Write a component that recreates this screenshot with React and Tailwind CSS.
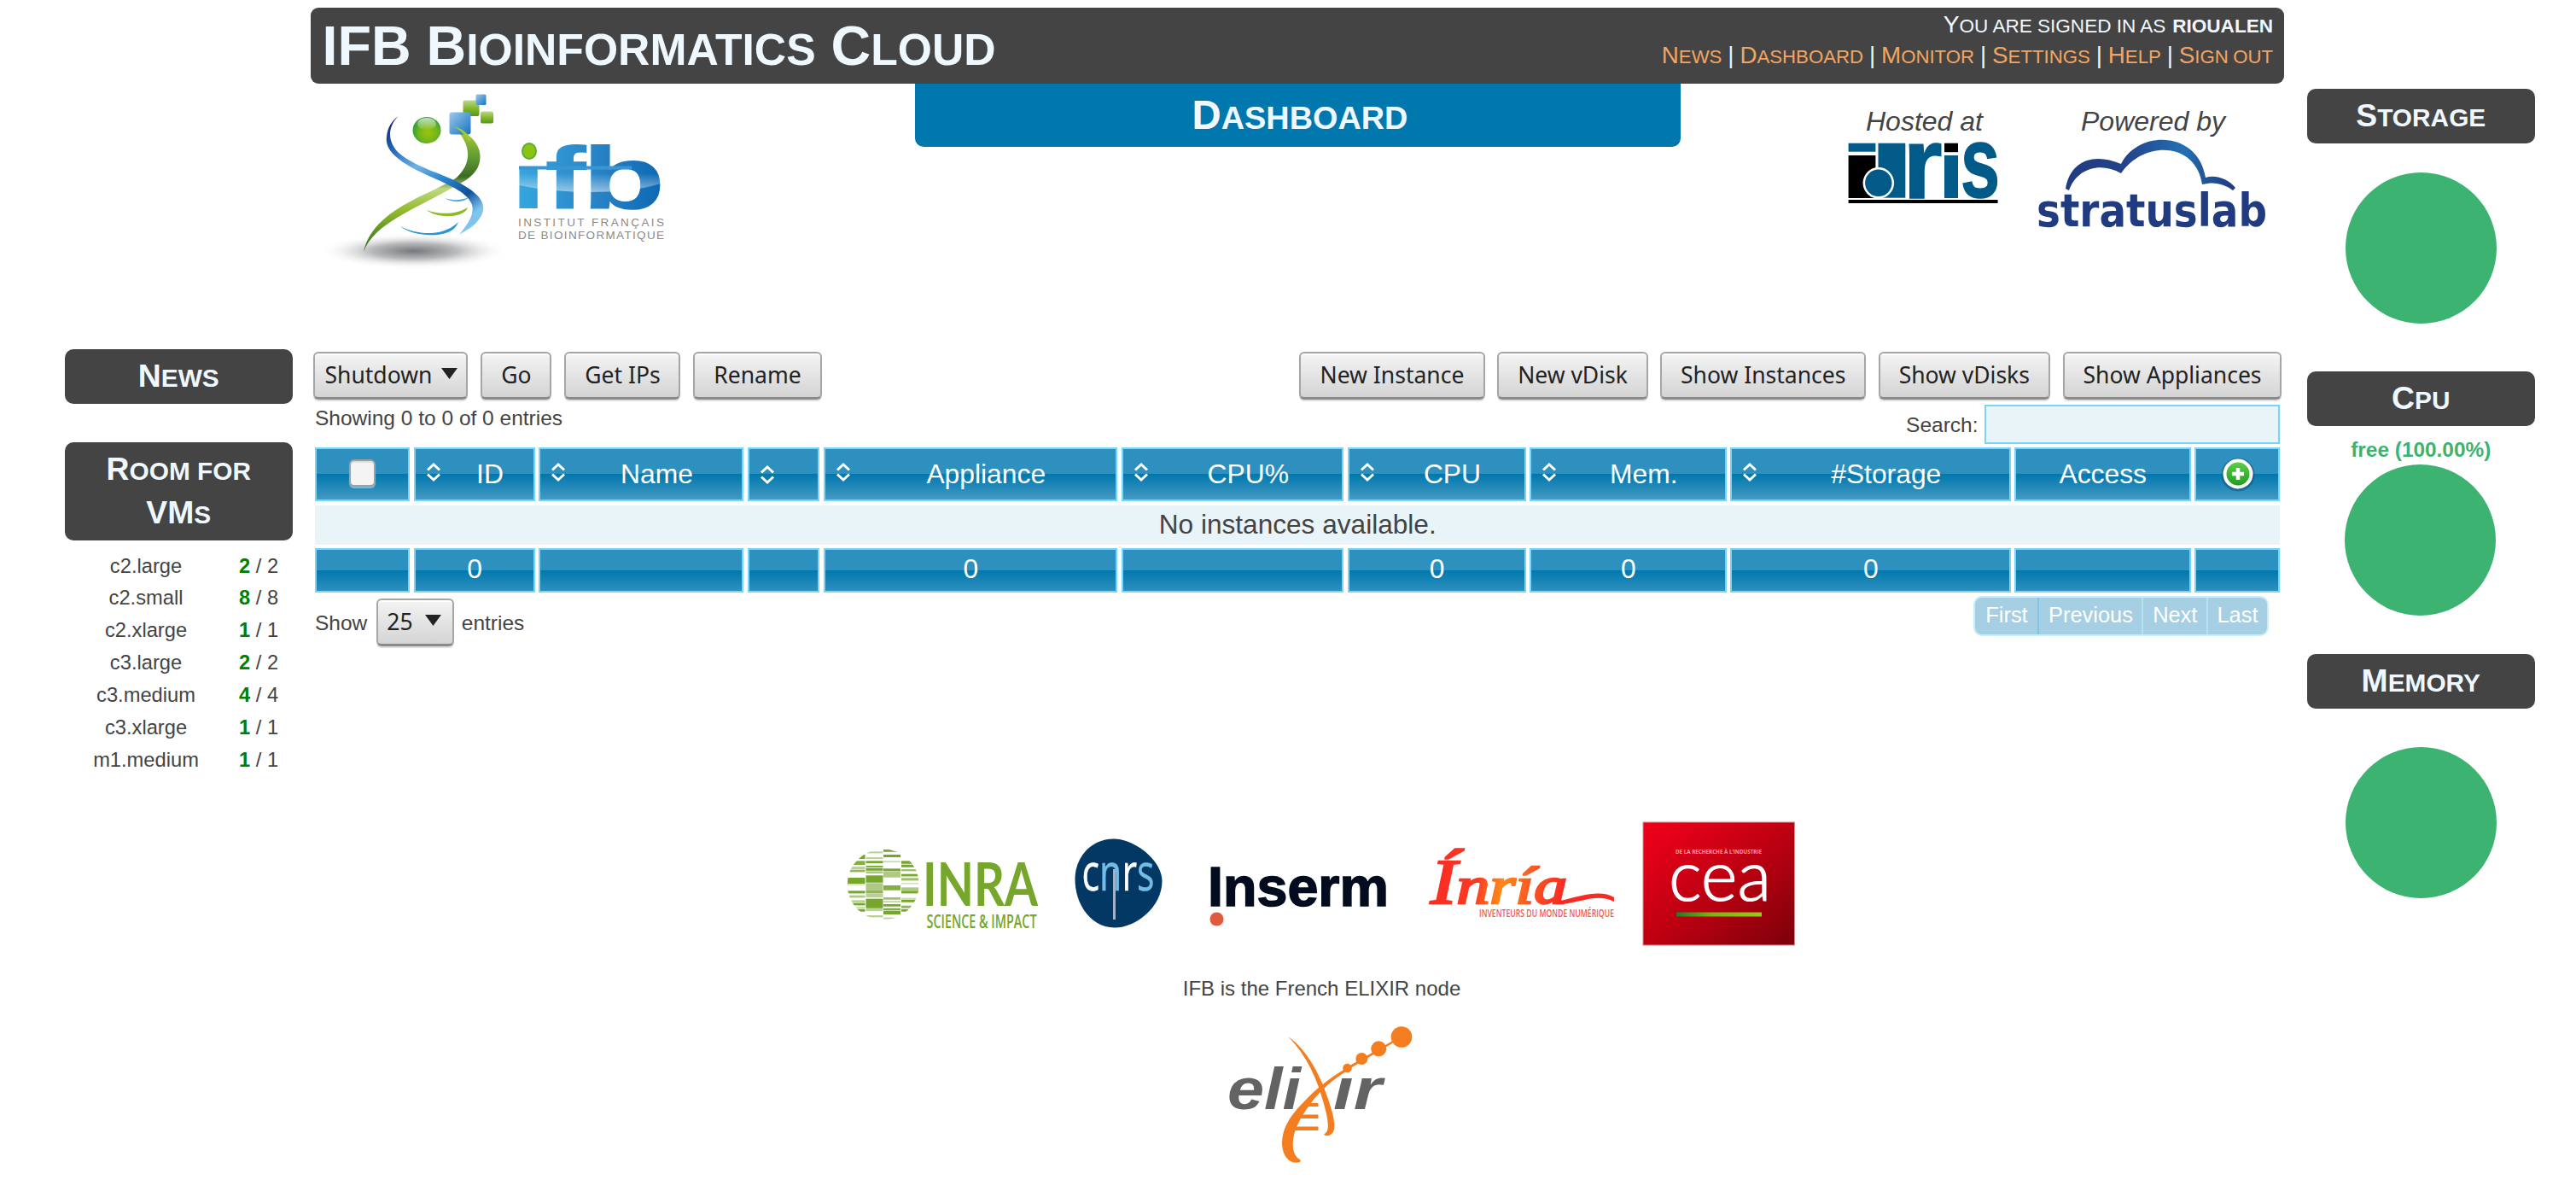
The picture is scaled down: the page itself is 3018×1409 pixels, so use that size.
import React from "react";

const SMALL_CAPS = "text-[0.8em] leading-none uppercase";

/* Renders text in which [bracketed] runs are small capitals. */
function Caps({ children }) {
  return children.split(/[[\]]/).map((part, i) =>
    i % 2 ? (
      <span key={i} className={SMALL_CAPS}>
        {part}
      </span>
    ) : (
      part
    )
  );
}

function SideBox({ children, className = "" }) {
  return (
    <h2
      className={`rounded-[10px] bg-[#444] pt-[6px] pb-[7.5px] text-center text-[37.3px] leading-[50.8px] font-bold text-[#f0f8ff] ${className}`}
    >
      {children}
    </h2>
  );
}

const BUTTON =
  "flex h-[56px] shrink-0 items-center rounded-[6px] border-2 border-b-[3px] border-[#a6a6a6] border-b-[#8a8a8a] bg-linear-to-b from-[#f4f4f4] to-[#d4d4d4] pb-[1px] font-['Noto_Sans',sans-serif] text-[26.5px] leading-none whitespace-nowrap text-[#222] shadow-[inset_0_2px_0_#fff,0_2px_1px_#ddd]";

function Button({ children, className }) {
  return <button className={`${BUTTON} justify-center ${className}`}>{children}</button>;
}

function Arrow() {
  return (
    <svg className="mt-[-3px] h-[13px] w-[19px]" viewBox="0 0 19 13">
      <path d="M0 0H19L9.5 13Z" fill="#222" />
    </svg>
  );
}

function SortIcon({ className = "" }) {
  return (
    <svg className={`h-[24px] w-[18px] shrink-0 ${className}`} viewBox="0 0 18 24" fill="none" stroke="#fff" strokeWidth="3">
      <path d="M2 9.5L9 3L16 9.5M2 14.5L9 21L16 14.5" />
    </svg>
  );
}

const COLS =
  "grid grid-cols-[111.5px_142px_240px_84.5px_344.5px_260.5px_209px_230.5px_328.5px_206.5px_100px] gap-x-[4.5px]";
const CELL = "border-[2.5px] border-[#76d5f8] text-[31.8px] leading-none text-white";

function Head({ children, sort }) {
  return (
    <div
      className={`${CELL} flex items-center bg-[linear-gradient(to_bottom,#2e90be_50%,#0078ae_50%,#4599c1)] ${sort ? "pl-[12px]" : "justify-center"}`}
    >
      {sort && <SortIcon className={children ? "mt-[-4px]" : "mt-[1px]"} />}
      {sort && children && <span className="ml-[6px] flex-1 text-center">{children}</span>}
      {!sort && children}
    </div>
  );
}

function Foot({ children }) {
  return (
    <div className={`${CELL} flex items-center justify-center bg-[linear-gradient(to_bottom,#2e90be_50%,#0078ae_50%,#2e90be)] pb-[2px]`}>
      {children}
    </div>
  );
}

function PlusIcon() {
  return (
    <svg className="ml-[2px] h-[44px] w-[44px]" viewBox="0 0 44 44">
      <defs>
        <linearGradient id="plus" x1="0" y1="0" x2="0" y2="1">
          <stop offset="0" stopColor="#5fd14c" />
          <stop offset="1" stopColor="#1d9a1d" />
        </linearGradient>
      </defs>
      <circle cx="22" cy="23" r="19.5" fill="#0a4a6c" opacity=".45" />
      <circle cx="22" cy="22" r="15.5" fill="url(#plus)" stroke="#fff" strokeWidth="4" />
      <path d="M22 15V29M15 22H29" stroke="#fff" strokeWidth="4.5" />
    </svg>
  );
}

function IfbLogo() {
  return (
    <svg className="h-[222px] w-[420px]" viewBox="366 98 420 222">
      <defs>
        <radialGradient id="shade">
          <stop offset="0" stopColor="#77787c" />
          <stop offset=".45" stopColor="#b9babc" />
          <stop offset="1" stopColor="#fff" stopOpacity="0" />
        </radialGradient>
        <radialGradient id="head" cx=".55" cy=".6">
          <stop offset="0" stopColor="#9cc40a" />
          <stop offset=".7" stopColor="#6fb51c" />
          <stop offset="1" stopColor="#3fa535" />
        </radialGradient>
        <linearGradient id="headShine" x1="0" y1="0" x2="0" y2="1">
          <stop offset="0" stopColor="#fff" stopOpacity=".7" />
          <stop offset="1" stopColor="#fff" stopOpacity=".05" />
        </linearGradient>
        <linearGradient id="sqBlue" x1="0" y1="0" x2="1" y2="1">
          <stop offset="0" stopColor="#9cc9ec" />
          <stop offset="1" stopColor="#1673bd" />
        </linearGradient>
        <linearGradient id="sqGreen" x1="0" y1="0" x2="0" y2="1">
          <stop offset="0" stopColor="#b9d795" />
          <stop offset=".5" stopColor="#86b827" />
          <stop offset="1" stopColor="#4e9a1f" />
        </linearGradient>
        <linearGradient id="blueStrand" x1="0" y1="0" x2=".6" y2="1">
          <stop offset="0" stopColor="#1b1464" />
          <stop offset=".22" stopColor="#1d62b0" />
          <stop offset=".45" stopColor="#6db3e6" />
          <stop offset=".65" stopColor="#2b83cb" />
          <stop offset=".85" stopColor="#10509c" />
          <stop offset="1" stopColor="#7fc4ee" />
        </linearGradient>
        <linearGradient id="greenStrand" x1="0" y1="0" x2="0" y2="1">
          <stop offset="0" stopColor="#b5d334" />
          <stop offset=".25" stopColor="#5f9a35" />
          <stop offset=".4" stopColor="#3a6b22" />
          <stop offset=".5" stopColor="#c0d880" />
          <stop offset=".68" stopColor="#8fb92a" />
          <stop offset="1" stopColor="#2d6a22" />
        </linearGradient>
        <linearGradient id="ifbFill" x1="608" y1="0" x2="776" y2="0" gradientUnits="userSpaceOnUse">
          <stop offset="0" stopColor="#35a6de" />
          <stop offset=".5" stopColor="#2b86c8" />
          <stop offset="1" stopColor="#0d68b4" />
        </linearGradient>
        <linearGradient id="ifbShine" x1="0" y1="0" x2="0" y2="1">
          <stop offset="0" stopColor="#fff" stopOpacity="0" />
          <stop offset="1" stopColor="#fff" stopOpacity=".5" />
        </linearGradient>
      </defs>
      <ellipse cx="485" cy="294" rx="112" ry="21" fill="url(#shade)" />
      <path d="M469 265C490 276 520 277 537 260C532 274 515 276 500 275C485 274 475 270 469 265Z" fill="#2b97d8" />
      <path d="M500 246C515 252 535 251 548 243C545 252 530 254 520 253C510 252 505 250 500 246Z" fill="#8fb92a" />
      <path d="M521 232C530 235 540 235 549 231C545 237 530 238 521 232Z" fill="#4aa8e0" />
      <path d="M531 148C552 168 554 190 535 208C510 226 436 244 426 295C438 262 484 246 530 220C554 208 563 198 562.5 182C562 168 550 156 531 148Z" fill="url(#greenStrand)" />
      <path d="M466.5 136C455 148 453 164 466 178C484 194 508 200 534 212C562 226 574 240 561 257C556 265 545 270 538 275C548 262 556 252 553 240C548 224 520 214 498 204C472 192 450 178 453 160C454 148 460 141 466.5 136Z" fill="url(#blueStrand)" />
      <ellipse cx="500" cy="152.5" rx="16.5" ry="15.5" fill="url(#head)" />
      <ellipse cx="500" cy="145" rx="11" ry="7" fill="url(#headShine)" />
      <rect x="542.5" y="117.5" width="19" height="18.5" rx="2" fill="url(#sqGreen)" />
      <rect x="526.5" y="131.5" width="25" height="26" rx="3" fill="url(#sqBlue)" />
      <path d="M531 148C540 152 546 160 549 166L552 163C548 156 541 150 531 148Z" fill="#a6c832" />
      <rect x="557.5" y="110.5" width="12" height="12.5" rx="1.5" fill="url(#sqBlue)" />
      <rect x="563" y="130.5" width="15" height="14" rx="2" fill="url(#sqGreen)" />
      <ellipse cx="620" cy="177" rx="8" ry="9" fill="#8cc414" stroke="#58b030" strokeWidth="2" />
      <g fill="url(#ifbFill)" fontFamily="'Liberation Sans', sans-serif" fontWeight="bold">
        <text x="597.5" y="244" textLength="43" lengthAdjust="spacingAndGlyphs" fontSize="88">ı</text>
        <text x="638" y="244" textLength="49" lengthAdjust="spacingAndGlyphs" fontSize="104">f</text>
        <text x="681" y="244" textLength="99" lengthAdjust="spacingAndGlyphs" fontSize="104">b</text>
      </g>
      <path d="M608 194.5H740V198.500H608Z" fill="#3a96d2" />
      <path d="M608 203H776V214C740 228 660 228 608 217Z" fill="url(#ifbShine)" />
      <g fill="#8a8a8a" fontFamily="'Liberation Sans', sans-serif" fontSize="13.5">
        <text x="607" y="264.5" textLength="171">INSTITUT FRANÇAIS</text>
        <text x="607" y="279.5" textLength="171">DE BIOINFORMATIQUE</text>
      </g>
    </svg>
  );
}

function IdrisLogo() {
  return (
    <svg className="h-[80px] w-[180px]" viewBox="2163 160 180 80">
      <rect x="2165.6" y="166.7" width="31.8" height="10" fill="#015a88" />
      <rect x="2165.6" y="181" width="31.8" height="50" fill="#000" />
      <rect x="2200.5" y="166.7" width="31.8" height="64" fill="#015a88" />
      <circle cx="2200.8" cy="213.3" r="17" fill="#015a88" stroke="#fff" strokeWidth="2.5" />
      <g fill="#015a88" stroke="#015a88" strokeWidth="1.5" fontFamily="'Liberation Sans', sans-serif" fontWeight="bold" fontSize="118">
        <text x="2229.5" y="230.5" textLength="46" lengthAdjust="spacingAndGlyphs">r</text>
        <text x="2297" y="230" textLength="46" lengthAdjust="spacingAndGlyphs">s</text>
      </g>
      <rect x="2278" y="166.7" width="16" height="10.5" fill="#000" />
      <rect x="2278" y="181" width="16" height="50" fill="#015a88" />
      <rect x="2165.6" y="233" width="175" height="4" fill="#000" />
    </svg>
  );
}

function StratusLogo() {
  return (
    <svg className="h-[110px] w-[280px]" viewBox="2380 160 280 110">
      <defs>
        <linearGradient id="cloud" x1="2418" y1="0" x2="2616" y2="0" gradientUnits="userSpaceOnUse">
          <stop offset="0" stopColor="#213b80" />
          <stop offset=".35" stopColor="#22438a" />
          <stop offset=".7" stopColor="#2470b4" />
          <stop offset=".8" stopColor="#22599c" />
          <stop offset="1" stopColor="#213b80" />
        </linearGradient>
      </defs>
      <path
        d="M2417 220C2423 185 2452 178 2482 191C2502 151 2572 151 2581 207C2594 203 2609 210 2616 219L2613 222C2604 215 2592 211 2577 215C2570 166 2510 162 2482 202C2458 188 2430 196 2421 222Z"
        fill="url(#cloud)"
      />
      <text x="2383" y="263.5" textLength="270" lengthAdjust="spacingAndGlyphs" fill="#213b80" fontFamily="'DejaVu Sans', sans-serif" fontWeight="bold" fontSize="54">
        stratuslab
      </text>
    </svg>
  );
}

/* Each column: x, width and its bars as [top, height, opacity]. */
const GLOBE = [
  [993, 20.5, [[183, 14, 1], [205, 13, 0.9], [225, 8, 0.5], [236, 7, 0.8], [264, 20, 1], [286, 4, 0.3], [310, 8, 1], [326, 7, 0.6], [343, 7, 0.5], [353, 7, 1], [366, 4, 0.4], [374, 8, 1]]],
  [1014.5, 20, [[172, 5, 0.5], [192, 5, 0.5], [205, 7, 1], [222, 4, 1], [230, 8, 1], [241, 7, 0.6], [256, 24, 1], [283, 22, 0.6], [307, 11, 0.8], [320, 12, 0.5], [338, 32, 1], [372, 8, 0.5], [396, 6, 0.5]]],
  [1035, 20, [[165, 7, 1], [183, 8, 1], [205, 4, 0.4], [232, 8, 1], [243, 19, 0.6], [291, 16, 0.9], [333, 7, 0.7], [345, 5, 0.4], [357, 7, 1], [371, 6, 0.9], [380, 12, 1], [404, 4, 0.5]]],
  [1056, 20.5, [[205, 9, 1], [218, 8, 1], [234, 6, 0.7], [251, 7, 1], [265, 8, 0.7], [282, 4, 0.3], [298, 10, 0.6], [310, 8, 1], [335, 3, 0.4], [341, 8, 1], [362, 8, 0.8], [375, 7, 1]]],
];

function InraLogo() {
  return (
    <svg className="h-[146px] w-[255px]" viewBox="985 962 255 146" fill="#76a62c">
      <clipPath id="globe">
        <ellipse cx="1034.7" cy="1036" rx="42" ry="41.5" />
      </clipPath>
      <g clipPath="url(#globe)">
        {GLOBE.map(([x, w, bars]) =>
          bars.map(([y, h, o]) => <rect key={`${x}-${y}`} x={x} y={940 + y / 3} width={w} height={h / 3 + 0.4} opacity={o} />)
        )}
      </g>
      <text x="1081" y="1061" textLength="135" lengthAdjust="spacingAndGlyphs" fontFamily="Lato, sans-serif" fontWeight="bold" fontSize="70">
        INRA
      </text>
      <text x="1085.5" y="1086.5" textLength="129" lengthAdjust="spacingAndGlyphs" fontFamily="'Open Sans', sans-serif" fontWeight="600" fontSize="21.5">
        SCIENCE &amp; IMPACT
      </text>
    </svg>
  );
}

function CnrsLogo() {
  return (
    <svg className="h-[146px] w-[160px]" viewBox="1240 962 160 146">
      <path d="M1305 982.5C1330 983 1361.5 1008 1361.5 1032C1361.5 1062 1331 1086.5 1306 1086.5C1277 1086.5 1259.5 1058 1259.5 1030C1259.5 1002 1280 982.5 1305 982.5Z" fill="#023863" />
      <path d="M1305.5 1018V1077" stroke="#9fb4c8" strokeWidth="3" />
      <text x="1267.5" y="1042.5" textLength="85" lengthAdjust="spacingAndGlyphs" fontFamily="'Open Sans', sans-serif" fontSize="61" fill="#fff" stroke="#fff" strokeWidth="0.5">
        c
        <tspan fill="#73bce6" stroke="#73bce6">n</tspan>r<tspan fill="#73bce6" stroke="#73bce6">s</tspan>
      </text>
    </svg>
  );
}

function InsermLogo() {
  return (
    <svg className="h-[146px] w-[250px]" viewBox="1400 962 250 146">
      <text x="1415" y="1060.5" textLength="212" lengthAdjust="spacingAndGlyphs" fill="#020c1e" stroke="#020c1e" strokeWidth="1.5" fontFamily="'Liberation Sans', sans-serif" fontWeight="bold" fontSize="64">
        Inserm
      </text>
      <circle cx="1425.5" cy="1076.5" r="8" fill="#e05a3c" />
    </svg>
  );
}

function InriaLogo() {
  return (
    <svg className="h-[146px] w-[274px]" viewBox="1650 962 274 146">
      <defs>
        <linearGradient id="inria" x1="1673" y1="1000" x2="1835" y2="1030" gradientUnits="userSpaceOnUse">
          <stop offset="0" stopColor="#f92a22" />
          <stop offset=".38" stopColor="#fb3a22" />
          <stop offset=".56" stopColor="#ff8a18" />
          <stop offset=".75" stopColor="#fb5a22" />
          <stop offset="1" stopColor="#f92a22" />
        </linearGradient>
      </defs>
      <text x="1676" y="1058" textLength="160" lengthAdjust="spacingAndGlyphs" fill="url(#inria)" stroke="url(#inria)" strokeWidth="2.5" fontFamily="'Liberation Serif', serif" fontStyle="italic" fontSize="73">
        Í<tspan fontSize="62">nría</tspan>
      </text>
      <path d="M1828 1055C1850 1050 1875 1041 1891 1051V1056C1872 1046 1855 1056 1830 1059Z" fill="#f92a22" />
      <text x="1733" y="1073.5" textLength="158" lengthAdjust="spacingAndGlyphs" fill="#f4564e" fontFamily="'Open Sans', sans-serif" fontWeight="600" fontSize="13">
        INVENTEURS DU MONDE NUMÉRIQUE
      </text>
    </svg>
  );
}

function CeaLogo() {
  return (
    <svg className="h-[146px] w-[179px]" viewBox="1924 962 179 146">
      <defs>
        <linearGradient id="cea" x1="0" y1="0" x2="1" y2="1">
          <stop offset="0" stopColor="#ee0019" />
          <stop offset=".15" stopColor="#e30018" />
          <stop offset=".55" stopColor="#b90011" />
          <stop offset="1" stopColor="#7c000a" />
        </linearGradient>
        <linearGradient id="ceaLine" x1="0" y1="0" x2="1" y2="0">
          <stop offset="0" stopColor="#227a22" />
          <stop offset=".4" stopColor="#7ab414" />
          <stop offset="1" stopColor="#9cc814" />
        </linearGradient>
      </defs>
      <rect x="1925" y="963" width="177.5" height="144" fill="url(#cea)" stroke="#d88a90" />
      <text x="1963" y="1000" textLength="101" lengthAdjust="spacingAndGlyphs" fill="#f0a0a4" fontFamily="'Open Sans', sans-serif" fontWeight="bold" fontSize="6.5">
        DE LA RECHERCHE À L’INDUSTRIE
      </text>
      <text x="1955" y="1054.5" textLength="120" lengthAdjust="spacingAndGlyphs" fill="#fff" stroke="#fff" strokeWidth="1.2" fontFamily="Lato, sans-serif" fontWeight="300" fontSize="83">
        cea
      </text>
      <rect x="1964" y="1068.5" width="100" height="5" fill="url(#ceaLine)" />
    </svg>
  );
}

function ElixirLogo() {
  return (
    <svg className="h-[175px] w-[230px]" viewBox="1433 1195 230 175">
      <g fill="#636363" fontFamily="'Liberation Sans', sans-serif" fontWeight="bold" fontStyle="italic" fontSize="68">
        <text x="1438" y="1298.5" textLength="86" lengthAdjust="spacingAndGlyphs">eli</text>
        <text x="1562" y="1298.5" textLength="57" lengthAdjust="spacingAndGlyphs">ır</text>
      </g>
      <g fill="#f47d20">
        <path d="M1509 1214C1530 1228 1546 1258 1553 1279C1560 1298 1568 1322 1560 1328C1557 1331 1552 1331 1551 1328C1560 1326 1555 1304 1547 1280C1540 1256 1527 1232 1509 1214Z" />
        <path d="M1579 1250C1562 1260 1545 1272 1530 1288C1510 1308 1502 1322 1502 1340C1503 1358 1514 1364 1523 1361C1525 1358 1522 1358 1520 1356C1512 1348 1514 1330 1520 1318C1530 1296 1552 1268 1581 1253Z" />
        <path d="M1578 1250L1642 1213L1643 1215L1579 1253Z" />
        <circle cx="1642" cy="1214.5" r="12.3" />
        <circle cx="1615.3" cy="1228.3" r="9" />
        <circle cx="1595.3" cy="1240" r="7" />
        <circle cx="1578.5" cy="1251" r="5.3" />
        <path d="M1532 1292H1544.5V1296H1529ZM1524 1305.5H1544.5V1310H1521ZM1516 1319.5H1544.5V1324H1514Z" />
      </g>
    </svg>
  );
}

const ROOMS = [
  ["c2.large", 2],
  ["c2.small", 8],
  ["c2.xlarge", 1],
  ["c3.large", 2],
  ["c3.medium", 4],
  ["c3.xlarge", 1],
  ["m1.medium", 1],
];

const LINKS = ["N[ews]", "D[ashboard]", "M[onitor]", "S[ettings]", "H[elp]", "S[ign out]"];

export default function App() {
  return (
    <div className="flex h-[1409px] w-[3018px] overflow-hidden bg-white pl-[76px] font-['Liberation_Sans',Arial,sans-serif] text-[24px] text-[#444]">
      <aside className="w-[266.6px] shrink-0 pt-[409px]">
        <SideBox>
          <Caps>N[ews]</Caps>
        </SideBox>
        <SideBox className="mt-[45px]">
          <Caps>R[oom for]</Caps>
          <br />
          <Caps>VM[s]</Caps>
        </SideBox>
        <ul className="mt-[11px]">
          {ROOMS.map(([name, n]) => (
            <li key={name} className="flex h-[37.87px] items-center text-[23.7px]">
              <span className="w-[190px] text-center">{name}</span>
              <span className="ml-[14px]">
                <b className="text-[#008000]">{n}</b> / {n}
              </span>
            </li>
          ))}
        </ul>
      </aside>

      <main className="ml-[21.4px] w-[2312px] shrink-0">
        <header className="mt-[9px] flex h-[89px] items-center justify-between rounded-[9px] bg-[#444] pr-[13px] pl-[13.5px] text-[#f0f8ff]">
          <h1 className="pt-[2px] text-[64.6px] leading-none font-bold whitespace-nowrap">
            <Caps>IFB B[ioinformatics] C[loud]</Caps>
          </h1>
          <div className="mb-[14px] text-right text-[27.75px] leading-[35.6px] whitespace-nowrap">
            <p className="text-[28.2px]">
              <Caps>Y[ou are signed in as]</Caps> <b className={SMALL_CAPS}>rioualen</b>
            </p>
            <nav className="[word-spacing:-0.8px]">
              {LINKS.map((link, i) => (
                <React.Fragment key={link}>
                  {i > 0 && " | "}
                  <a className="text-[#f4a460]">
                    <Caps>{link}</Caps>
                  </a>
                </React.Fragment>
              ))}
            </nav>
          </div>
        </header>

        <div className="flex h-[314px] items-start">
          <div className="w-[708px] pl-[2px]">
            <IfbLogo />
          </div>
          <h2 className="h-[74px] w-[897px] rounded-b-[10px] bg-[#0078ae] pl-[5px] text-center text-[47.3px] leading-[74px] font-bold text-[#f0f8ff]">
            <Caps>D[ashboard]</Caps>
          </h2>
          <div className="flex flex-1 justify-end pt-[24px] pr-[13px] text-[32px] leading-[38px]">
            <figure className="flex w-[180px] flex-col items-center">
              <figcaption className="pt-[1px] pl-[3px] italic">Hosted at</figcaption>
              <IdrisLogo />
            </figure>
            <figure className="ml-[40px] flex w-[280px] flex-col items-center">
              <figcaption className="pt-[1px] pr-[1px] italic">Powered by</figcaption>
              <StratusLogo />
            </figure>
          </div>
        </div>

        <div className="flex items-center pr-[2.5px] pl-[3.5px]">
          <button className={`${BUTTON} w-[181px] gap-[11px] pl-[11px]`}>
            Shutdown
            <Arrow />
          </button>
          <Button className="ml-[15px] w-[83px]">Go</Button>
          <Button className="ml-[15px] w-[136px]">Get IPs</Button>
          <Button className="ml-[14.5px] w-[151px]">Rename</Button>
          <Button className="ml-auto w-[217.5px]">New Instance</Button>
          <Button className="ml-[14.3px] w-[177px]">New vDisk</Button>
          <Button className="ml-[14.4px] w-[240.6px]">Show Instances</Button>
          <Button className="ml-[15px] w-[200.6px]">Show vDisks</Button>
          <Button className="ml-[15px] w-[256.9px]">Show Appliances</Button>
        </div>

        <section className="ml-[5px] w-[2302.5px]">
          <div className="flex h-[56.3px] items-start justify-between text-[24.5px]">
            <span className="leading-[43px]">Showing 0 to 0 of 0 entries</span>
            <label className="mt-[5.5px] flex h-[46.5px] items-center">
              <span className="pt-[3px]">Search:</span>
              <span className="ml-[8px] h-full w-[346px] border-[2.5px] border-[#76d5f8] bg-[#e8f4f7]" />
            </label>
          </div>

          <div className={`${COLS} h-[62.4px]`}>
            <Head>
              <span className="mb-[3px] h-[32px] w-[31px] rounded-[6px] border-2 border-[#a0a0a0] bg-[#f4f4f4] shadow-[inset_0_2px_1px_#ddd,0_2px_1px_#7db9d9]" />
            </Head>
            <Head sort>ID</Head>
            <Head sort>Name</Head>
            <Head sort />
            <Head sort>Appliance</Head>
            <Head sort>CPU%</Head>
            <Head sort>CPU</Head>
            <Head sort>Mem.</Head>
            <Head sort>#Storage</Head>
            <Head>Access</Head>
            <Head>
              <PlusIcon />
            </Head>
          </div>
          <div className="mt-[5px] flex h-[46px] items-center justify-center bg-[#e8f4f7] text-[31.6px] leading-none">
            No instances available.
          </div>
          <div className={`${COLS} mt-[4.6px] h-[51.4px]`}>
            <Foot />
            <Foot>0</Foot>
            <Foot />
            <Foot />
            <Foot>0</Foot>
            <Foot />
            <Foot>0</Foot>
            <Foot>0</Foot>
            <Foot>0</Foot>
            <Foot />
            <Foot />
          </div>

          <div className="flex h-[268.3px] items-start justify-between">
            <div className="mt-[7.5px] flex items-center text-[24.5px]">
              <span className="pt-[2px]">Show</span>
              <span className={`${BUTTON} mr-[9px] ml-[10.5px] w-[91px] gap-[14px] pl-[10.5px]`}>
                25
                <Arrow />
              </span>
              <span className="pt-[2px]">entries</span>
            </div>
            <div className="mt-[4.5px] mr-[13.5px] flex h-[46.5px] overflow-hidden rounded-[10px] border-[2.5px] border-[#c8edfb] bg-[#a6cfe4] text-center text-[25.4px] leading-[40px] text-white">
              <span className="w-[75px] border-r-2 border-[#7cc6e8]">First</span>
              <span className="w-[122px] border-r-2 border-[#b4e2f4]">Previous</span>
              <span className="w-[75.5px] border-r-2 border-[#b4e2f4]">Next</span>
              <span className="w-[69px]">Last</span>
            </div>
          </div>
        </section>

        <footer>
          <div className="flex pl-[621px]">
            <InraLogo />
            <CnrsLogo />
            <InsermLogo />
            <InriaLogo />
            <CeaLogo />
          </div>
          <div className="flex flex-col items-center pt-[32px] pl-[57px]">
            <p className="leading-[36px]">IFB is the French ELIXIR node</p>
            <div className="mt-[19px]">
              <ElixirLogo />
            </div>
          </div>
        </footer>
      </main>

      <aside className="ml-[27px] w-[266.6px] shrink-0 pt-[103.5px]">
        <section className="flex h-[331.3px] flex-col items-center">
          <SideBox className="w-full">
            <Caps>S[torage]</Caps>
          </SideBox>
          <div className="mt-[34px] h-[177px] w-[177px] rounded-full bg-[#3cb371]" />
        </section>
        <section className="flex h-[331.3px] flex-col items-center">
          <SideBox className="w-full">
            <Caps>C[pu]</Caps>
          </SideBox>
          <p className="mt-[10px] h-[35px] text-[24.4px] leading-[35px] font-bold text-[#3cb371]">free (100.00%)</p>
          <div className="mr-[2px] h-[177px] w-[177px] rounded-full bg-[#3cb371]" />
        </section>
        <section className="flex flex-col items-center">
          <SideBox className="w-full">
            <Caps>M[emory]</Caps>
          </SideBox>
          <div className="mt-[44.5px] h-[177px] w-[177px] rounded-full bg-[#3cb371]" />
        </section>
      </aside>
    </div>
  );
}
